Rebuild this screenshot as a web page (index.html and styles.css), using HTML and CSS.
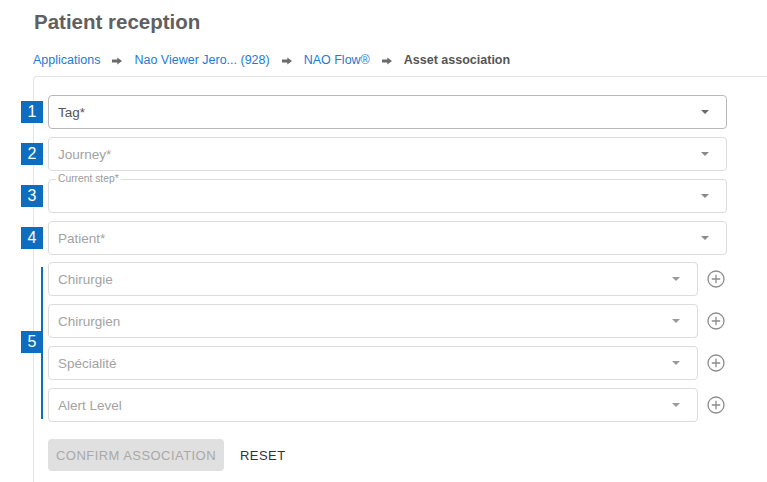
FILE: index.html
```html
<!DOCTYPE html>
<html lang="en">
<head>
<meta charset="utf-8">
<title>Patient reception</title>
<link rel="stylesheet" href="styles.css">
</head>
<body>
<div class="page">
  <h1 class="title">Patient reception</h1>
  <nav class="crumbs">
    <a class="crumb">Applications</a>
    <span class="sep"><svg width="10" height="8" viewBox="0 0 10 8"><path d="M0 2.5h5.3V0.4L10 4 5.3 7.6V5.5H0z" fill="#6b6b6b"/></svg></span>
    <a class="crumb">Nao Viewer Jero... (928)</a>
    <span class="sep"><svg width="10" height="8" viewBox="0 0 10 8"><path d="M0 2.5h5.3V0.4L10 4 5.3 7.6V5.5H0z" fill="#6b6b6b"/></svg></span>
    <a class="crumb">NAO Flow®</a>
    <span class="sep"><svg width="10" height="8" viewBox="0 0 10 8"><path d="M0 2.5h5.3V0.4L10 4 5.3 7.6V5.5H0z" fill="#6b6b6b"/></svg></span>
    <span class="current">Asset association</span>
  </nav>
  <div class="card">
    <div class="rows">
      <div class="row">
        <span class="badge">1</span>
        <div class="select select-active"><span class="value value-dark">Tag*</span><span class="caret caret-dark"></span></div>
      </div>
      <div class="row">
        <span class="badge">2</span>
        <div class="select"><span class="value">Journey*</span><span class="caret"></span></div>
      </div>
      <div class="row">
        <span class="badge">3</span>
        <div class="select select-labelled"><span class="float-label">Current step*</span><span class="value"></span><span class="caret"></span></div>
      </div>
      <div class="row">
        <span class="badge">4</span>
        <div class="select"><span class="value">Patient*</span><span class="caret"></span></div>
      </div>
      <div class="group">
        <div class="group-mark"><span class="badge">5</span></div>
        <div class="group-rows">
          <div class="group-row">
            <div class="select"><span class="value">Chirurgie</span><span class="caret caret-light"></span></div>
            <svg class="plus" width="18" height="18" viewBox="0 0 18 18"><circle cx="9" cy="9" r="8" fill="none" stroke="#8c8c8c" stroke-width="1.3"/><path d="M9 4.8v8.4M4.8 9h8.4" stroke="#8c8c8c" stroke-width="1.3"/></svg>
          </div>
          <div class="group-row">
            <div class="select"><span class="value">Chirurgien</span><span class="caret caret-light"></span></div>
            <svg class="plus" width="18" height="18" viewBox="0 0 18 18"><circle cx="9" cy="9" r="8" fill="none" stroke="#8c8c8c" stroke-width="1.3"/><path d="M9 4.8v8.4M4.8 9h8.4" stroke="#8c8c8c" stroke-width="1.3"/></svg>
          </div>
          <div class="group-row">
            <div class="select"><span class="value">Spécialité</span><span class="caret caret-light"></span></div>
            <svg class="plus" width="18" height="18" viewBox="0 0 18 18"><circle cx="9" cy="9" r="8" fill="none" stroke="#8c8c8c" stroke-width="1.3"/><path d="M9 4.8v8.4M4.8 9h8.4" stroke="#8c8c8c" stroke-width="1.3"/></svg>
          </div>
          <div class="group-row">
            <div class="select"><span class="value">Alert Level</span><span class="caret caret-light"></span></div>
            <svg class="plus" width="18" height="18" viewBox="0 0 18 18"><circle cx="9" cy="9" r="8" fill="none" stroke="#8c8c8c" stroke-width="1.3"/><path d="M9 4.8v8.4M4.8 9h8.4" stroke="#8c8c8c" stroke-width="1.3"/></svg>
          </div>
        </div>
      </div>
    </div>
    <div class="actions">
      <button class="btn btn-disabled" disabled>Confirm association</button>
      <button class="btn btn-text">Reset</button>
    </div>
  </div>
</div>
</body>
</html>
```
FILE: styles.css
```css
* { box-sizing: border-box; }
html, body { margin: 0; padding: 0; background: #fff; }
body {
  font-family: "Liberation Sans", Arial, sans-serif;
  color: #333;
  width: 767px;
  height: 482px;
  overflow: hidden;
}
.page { padding-top: 10px; }
.title {
  margin: 0 0 0 34px;
  font-size: 20.5px;
  line-height: 24px;
  font-weight: bold;
  color: #606060;
}
.crumbs {
  margin: 18px 0 0 33px;
  display: flex;
  align-items: center;
  font-size: 12.5px;
  line-height: 16px;
  height: 16px;
}
.crumb { color: #1f7ad3; text-decoration: none; }
.sep { display: flex; align-items: center; margin: 1px 12px 0 12px; }
.current { color: #555; font-weight: bold; }

.card {
  margin: 8px 0 0 33px;
  border-left: 1px solid #e4e4e4;
  border-top: 1px solid #e4e4e4;
  border-top-left-radius: 4px;
  padding: 18px 0 30px;
}
.rows {
  margin-left: -13px;
  width: 706px;
  display: flex;
  flex-direction: column;
  gap: 8px;
}
.row {
  display: grid;
  grid-template-columns: 22px 1fr;
  column-gap: 5px;
  align-items: center;
}
.badge {
  position: relative;
  z-index: 1;
  width: 22px;
  height: 22px;
  background: #0f6dbf;
  color: #fff;
  font-size: 16px;
  line-height: 22px;
  text-align: center;
}
.select {
  position: relative;
  height: 34px;
  border: 1px solid #dcdcdc;
  border-radius: 4px;
  padding: 0 17px 0 9px;
  display: flex;
  align-items: center;
  justify-content: space-between;
  background: #fff;
}
.select-active { border-color: #b9b9b9; }
.value { font-size: 13.5px; color: #a3a3a3; }
.value-dark { color: #555; }
.caret {
  width: 0;
  height: 0;
  border-left: 4px solid transparent;
  border-right: 4px solid transparent;
  border-top: 4px solid #8a8a8a;
}
.caret-dark { border-top-color: #6a6a6a; }
.caret-light { border-top-color: #9a9a9a; }
.float-label {
  position: absolute;
  left: 7px;
  top: -7px;
  padding: 0 2px;
  background: #fff;
  font-size: 10.3px;
  line-height: 12px;
  color: #9a9a9a;
}
.group {
  margin-top: -1px;
  display: grid;
  grid-template-columns: 22px 1fr;
  column-gap: 5px;
}
.group-mark {
  position: relative;
  display: flex;
  align-items: center;
}
.group-mark::before {
  content: "";
  position: absolute;
  right: 0;
  top: 5px;
  bottom: 3px;
  width: 2px;
  background: #0f6dbf;
}
.group-rows {
  display: flex;
  flex-direction: column;
  gap: 8px;
}
.group-row {
  display: grid;
  grid-template-columns: 1fr 20px;
  column-gap: 9px;
  align-items: center;
}
.plus { display: block; }
.actions {
  margin: 17px 0 0 14px;
  display: flex;
  gap: 8px;
}
.btn {
  height: 32px;
  padding: 0 8px;
  border: 0;
  border-radius: 4px;
  font-family: "Liberation Sans", Arial, sans-serif;
  font-size: 13px;
  letter-spacing: 0.45px;
  text-transform: uppercase;
}
.btn-disabled { background: #e0e0e0; color: #a9a9a9; }
.btn-text { background: transparent; color: #333; }
```
